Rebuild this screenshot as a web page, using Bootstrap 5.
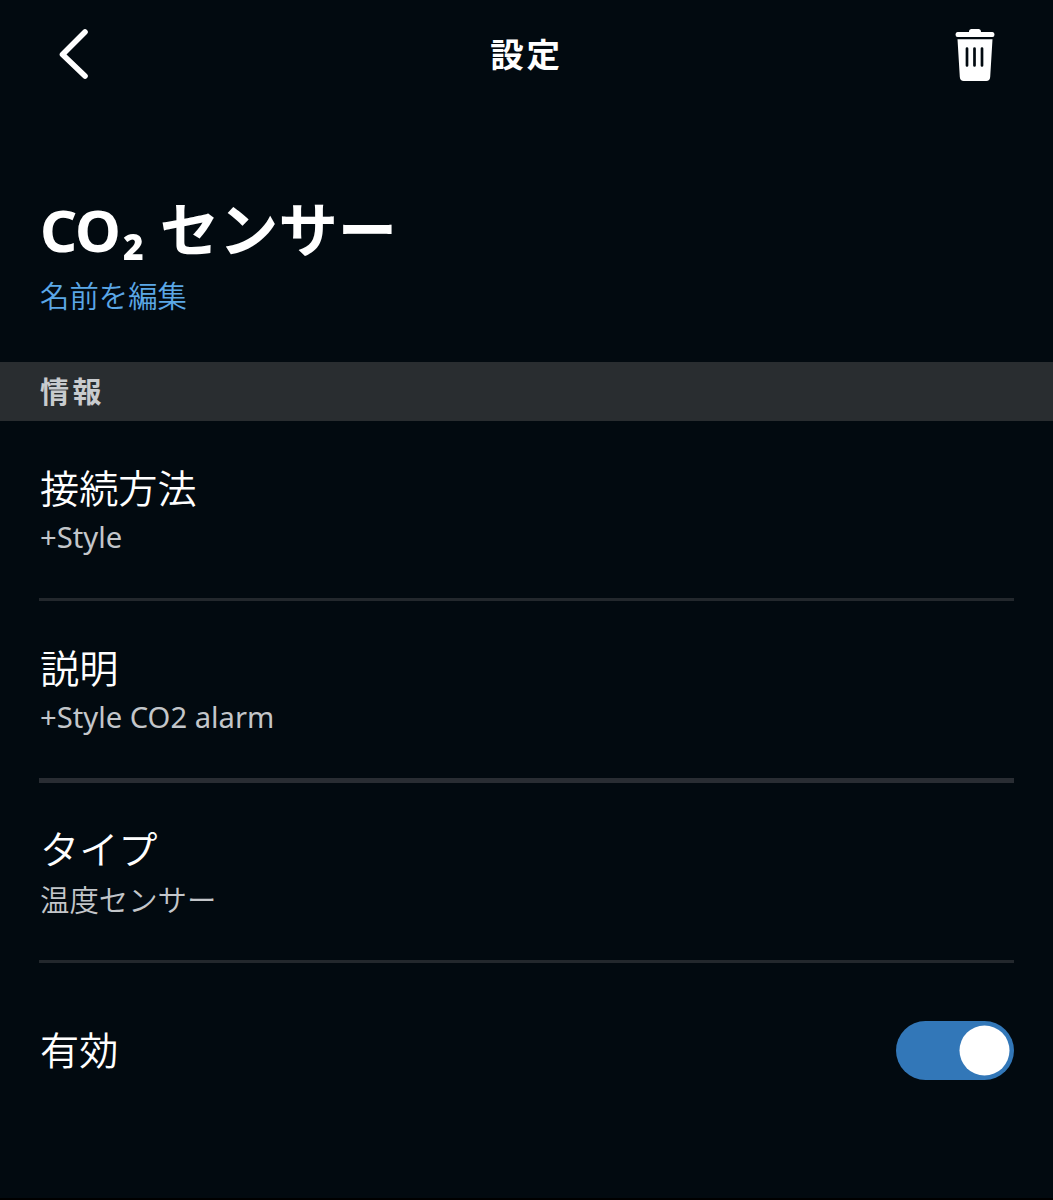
<!DOCTYPE html>
<html lang="ja">
<head>
<meta charset="utf-8">
<meta name="viewport" content="width=device-width, initial-scale=1">
<title>設定</title>
<link href="https://cdn.jsdelivr.net/npm/bootstrap@5.3.0/dist/css/bootstrap.min.css" rel="stylesheet">
<style>
body{background:#020a10;color:#fff;font-family:"Noto Sans","Noto Sans CJK JP",sans-serif;overflow:hidden}
.jp{font-family:"Noto Sans CJK JP",sans-serif}
.screen{height:1200px;border-bottom:2px solid #000}
.topbar{height:108px;padding:0 58px}
.topbar-title{font-size:33.5px;letter-spacing:2.7px;line-height:40px;padding-bottom:2px}
.device{height:254px;padding:74px 40px 0}
.device-name{font-size:59.300px;line-height:88px;white-space:nowrap}
.latin{letter-spacing:-1.2px;font-size:58px}
.subscript{margin-left:3px}
.kana{margin-left:1px}
.edit-link{font-size:29.4px;line-height:40px;color:#5ba7e6;font-weight:350}
.section-bar{height:59px;padding:0 40px 2px;background:#292d30;color:#c8cbce;font-size:29px;letter-spacing:3.4px}
.entry{margin:0 39px;padding:40px 1px 0;height:180px;border-bottom:3px solid #23282d}
.entry-wide{height:182px;border-bottom-width:5px;border-bottom-color:#292d33}
.entry-last{height:180px;padding-top:39px}
.entry-title{font-size:39.200px;line-height:50px;font-weight:350}
.entry-value{font-size:29.2px;line-height:44px;color:#c3c6ca;padding-top:4px}
.entry-kana{font-size:29.4px;font-weight:350}
.switch-row{margin:0 39px;height:175px;padding-left:1px}
.switch-row .entry-title{padding-bottom:5px}
.form-switch .form-check-input.toggle{width:118px;height:59px;margin:0;border:0;background-color:#3277b8;background-size:59px 59px;background-image:url("data:image/svg+xml,%3csvg xmlns='http://www.w3.org/2000/svg' viewBox='0 0 59 59'%3e%3ccircle cx='29.5' cy='29.5' r='25' fill='%23fff'/%3e%3c/svg%3e")}
</style>
</head>
<body>
<main class="screen">
<header class="topbar d-flex align-items-center justify-content-between">
<svg width="40" height="54" viewBox="0 0 40 54" fill="none" stroke="#fff" stroke-width="5.6" stroke-linecap="round" stroke-linejoin="round"><path d="M27 5 4.500 27.500 27 49"/></svg>
<h1 class="topbar-title jp fw-bold m-0">設定</h1>
<svg width="40" height="54" viewBox="0 0 40 54"><path fill="#fff" d="M2.500 5H14c0-3 2-3 3-3h6c1 0 3 0 3 3h11.500q2 0 2 2.500T37.500 10h-35Q.5 10 .5 7.500T2.500 5zM2.500 12.300h35l-2.300 37.700q-.3 4-4 4H8.800q-3.700 0-4-4z"/><path d="M12 21.500v17M19.500 21.500v17M27 21.500v17" stroke="#020a10" stroke-width="2.700" stroke-linecap="round"/></svg>
</header>
<section class="device">
<h2 class="device-name fw-bold m-0"><span class="latin">CO<span class="subscript">₂</span></span> <span class="jp kana">センサー</span></h2>
<a href="#" class="edit-link jp d-block text-decoration-none">名前を編集</a>
</section>
<div class="section-bar jp d-flex align-items-center fw-bold">情報</div>
<section>
<div class="entry"><div class="entry-title jp">接続方法</div><div class="entry-value">+Style</div></div>
<div class="entry entry-wide"><div class="entry-title jp">説明</div><div class="entry-value">+Style CO2 alarm</div></div>
<div class="entry entry-last"><div class="entry-title jp">タイプ</div><div class="entry-value entry-kana jp">温度センサー</div></div>
<div class="switch-row form-switch d-flex align-items-center justify-content-between">
<label class="entry-title jp" for="enabled">有効</label>
<input class="form-check-input toggle" type="checkbox" role="switch" id="enabled" checked>
</div>
</section>
</main>
<script src="https://cdn.jsdelivr.net/npm/bootstrap@5.3.0/dist/js/bootstrap.bundle.min.js"></script>
</body>
</html>
